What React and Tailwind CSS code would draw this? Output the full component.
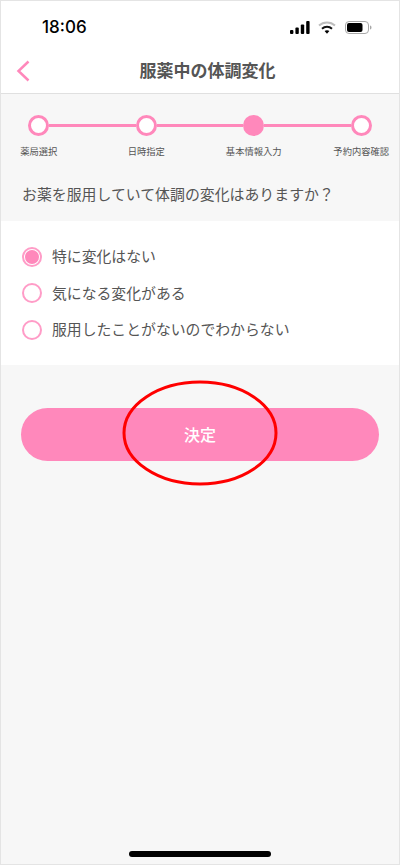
const font = { fontFamily: '"Noto Sans CJK JP", sans-serif' };

const steps = [
  { label: '薬局選択' },
  { label: '日時指定' },
  { label: '基本情報入力', active: true },
  { label: '予約内容確認' },
];

const options = [
  { label: '特に変化はない', checked: true },
  { label: '気になる変化がある' },
  { label: '服用したことがないのでわからない' },
];

const StatusIcons = () => (
  <div className="flex items-center">
    <svg width="20" height="13" viewBox="0 0 20 13" fill="#000">
      <rect x="0" y="9" width="3.4" height="4" rx="1" />
      <rect x="5.4" y="6.5" width="3.4" height="6.5" rx="1" />
      <rect x="10.8" y="3.5" width="3.4" height="9.5" rx="1" />
      <rect x="16.2" y="0" width="3.4" height="13" rx="1" />
    </svg>
    <svg className="ml-[8px]" width="18" height="13" viewBox="0 0 18 13" fill="none">
      <path d="M1 4.6C5.5 .5 12.5 .5 17 4.6" stroke="#bdbdbd" strokeWidth="2" />
      <path d="M4 7.7C6.8 5.2 11.2 5.2 14 7.7" stroke="#111" strokeWidth="2" />
      <path d="M6.6 10.1L9 12.7L11.4 10.1C10 9 8 9 6.6 10.1Z" fill="#000" />
    </svg>
    <svg className="ml-[9px]" width="27" height="13" viewBox="0 0 27 13" fill="none">
      <rect x="0.5" y="0.5" width="23" height="12" rx="3.5" stroke="#a8a8a8" />
      <rect x="2" y="2" width="15.5" height="9" rx="2" fill="#000" />
      <path d="M25 4.5C26 4.8 26.5 5.5 26.5 6.5C26.5 7.5 26 8.2 25 8.5Z" fill="#a8a8a8" />
    </svg>
  </div>
);

const App = () => {
  return (
    <div
      className="relative h-[865px] w-[400px] overflow-hidden border border-[#e4e4e4] bg-[#f7f7f7] text-[#555]"
      style={font}
    >
      <div className="h-[93px] border-b border-[#e0e0e0] bg-white">
        <div className="flex h-[51px] items-center justify-between pl-[41px] pr-[27px] pt-[2px]">
          <span
            className="text-[17px] font-medium leading-none text-black"
            style={{ fontFamily: 'Inter, sans-serif' }}
          >
            18:06
          </span>
          <StatusIcons />
        </div>
        <div className="relative flex h-[41px] items-center justify-center">
          <svg
            className="absolute left-[15px] top-[8px]"
            width="15"
            height="22"
            viewBox="0 0 15 22"
            fill="none"
          >
            <path d="M12.5 1.5L2.5 11L12.5 20.5" stroke="#ff88bb" strokeWidth="2.5" />
          </svg>
          <h1 className="pb-[7px] pl-[15px] text-[17px] font-bold leading-none text-[#555]">服薬中の体調変化</h1>
        </div>
      </div>

      <div className="h-[127px]">
        <div className="flex items-center pl-[27px] pr-[27px] pt-[21px]">
          {steps.map((step, i) => (
            <div key={step.label} className={i < 3 ? 'flex flex-1 items-center' : 'flex items-center'}>
              <div
                className={
                  step.active
                    ? 'h-[21px] w-[21px] shrink-0 rounded-full bg-[#ff88bb]'
                    : 'h-[21px] w-[21px] shrink-0 rounded-full border-[3px] border-[#ff88bb] bg-white'
                }
              />
              {i < 3 && <div className="h-[3px] flex-1 bg-[#ff88bb]" />}
            </div>
          ))}
        </div>
        <div className="ml-[-16px] mt-[8px] grid w-[430px] grid-cols-4">
          {steps.map((step) => (
            <div key={step.label} className="whitespace-nowrap text-center text-[9.3px] leading-[14px] text-[#555]">
              {step.label}
            </div>
          ))}
        </div>
        <p className="ml-[21px] mt-[25px] whitespace-nowrap text-[14.9px] leading-[22px] text-[#555]">
          お薬を服用していて体調の変化はありますか？
        </p>
      </div>

      <div className="flex h-[144px] flex-col justify-center gap-[16.5px] bg-white pl-[21px]">
        {options.map((opt) => (
          <div key={opt.label} className="flex h-[20px] items-center">
            <div className="flex h-[20px] w-[20px] items-center justify-center rounded-full border-2 border-[#ff9cc7] bg-white">
              {opt.checked && <div className="h-[14px] w-[14px] rounded-full bg-[#ff88bb]" />}
            </div>
            <span className="ml-[10px] text-[14.85px] leading-none text-[#555]">{opt.label}</span>
          </div>
        ))}
      </div>

      <div className="px-[20px] pt-[43px]">
        <button className="h-[53px] w-full rounded-full bg-[#ff88bb] pb-[1px] text-[16px] font-medium text-white">
          決定
        </button>
      </div>

      {/* annotation over the button */}
      <svg
        className="absolute left-[120px] top-[379px]"
        width="158"
        height="108"
        viewBox="0 0 158 108"
        fill="none"
      >
        <ellipse cx="79" cy="53" rx="76" ry="51" stroke="#ff0000" strokeWidth="3" />
      </svg>

      <div className="absolute bottom-[7px] left-[128px] h-[6px] w-[142px] rounded-full bg-black" />
    </div>
  );
};

export default App;
